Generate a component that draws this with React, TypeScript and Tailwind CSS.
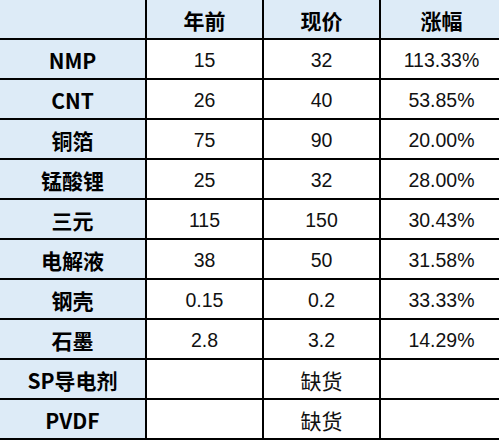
import React from "react";

const rows: [string, string, string, string][] = [
  ["NMP", "15", "32", "113.33%"],
  ["CNT", "26", "40", "53.85%"],
  ["铜箔", "75", "90", "20.00%"],
  ["锰酸锂", "25", "32", "28.00%"],
  ["三元", "115", "150", "30.43%"],
  ["电解液", "38", "50", "31.58%"],
  ["钢壳", "0.15", "0.2", "33.33%"],
  ["石墨", "2.8", "3.2", "14.29%"],
  ["SP导电剂", "", "缺货", ""],
  ["PVDF", "", "缺货", ""],
];

const cjkBold = "font-['Noto_Sans_CJK_SC',sans-serif] font-bold text-[21px] text-black";
const num = "font-['Liberation_Sans','Noto_Sans_CJK_SC',sans-serif] text-[19.5px] text-[#111]";
const cjkReg = "font-['Noto_Sans_CJK_SC',sans-serif] text-[21px] text-[#111]";
const cell = "h-[40px] flex items-center justify-center border-b-2 border-black pt-[4px]";

export default function App() {
  return (
    <div className="w-[499px] h-[441px] bg-white overflow-hidden">
      <div className="grid grid-cols-[147px_117px_117px_1fr] w-[502px]">
        <div className={`${cell} bg-[#ddebf7] border-r-2`} />
        <div className={`${cell} bg-[#ddebf7] border-r-2 ${cjkBold}`}>年前</div>
        <div className={`${cell} bg-[#ddebf7] border-r-2 ${cjkBold}`}>现价</div>
        <div className={`${cell} bg-[#ddebf7] ${cjkBold}`}>涨幅</div>
        {rows.map((r, i) => (
          <React.Fragment key={i}>
            <div className={`${cell} bg-[#ddebf7] border-r-2 ${cjkBold}`}>{r[0]}</div>
            <div className={`${cell} bg-white border-r-2 ${num}`}>{r[1]}</div>
            <div className={`${cell} bg-white border-r-2 ${r[2] === "缺货" ? cjkReg : num}`}>{r[2]}</div>
            <div className={`${cell} bg-white ${num}`}>{r[3]}</div>
          </React.Fragment>
        ))}
      </div>
    </div>
  );
}
